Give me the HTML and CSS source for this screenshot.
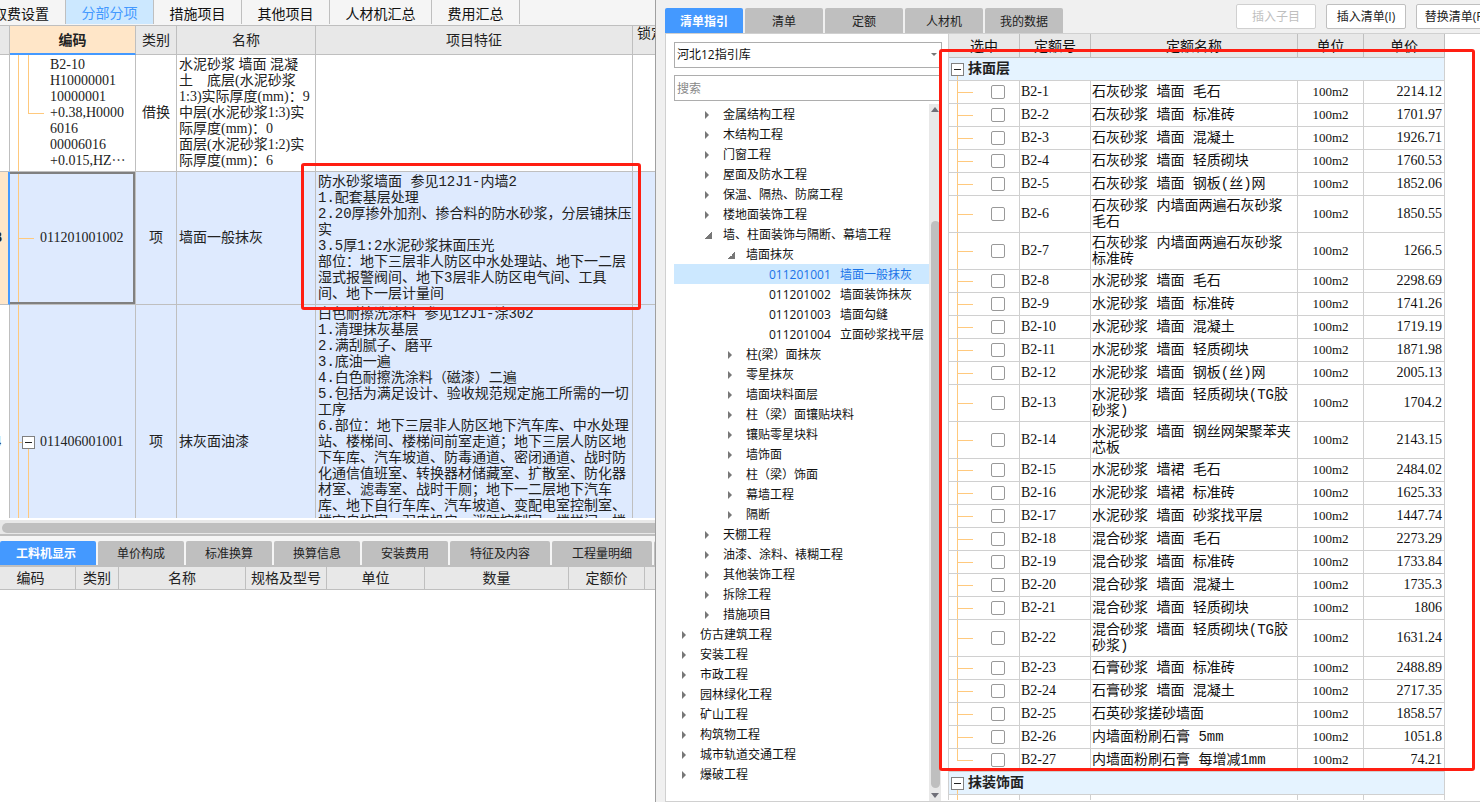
FILE: index.html
```html
<!DOCTYPE html>
<html lang="zh-CN">
<head>
<meta charset="utf-8">
<title>分部分项</title>
<link rel="stylesheet" href="styles.css">
</head>
<body>
<main class="app">
  <section class="left">
    <div class="upper">
      <nav class="main-tabs">
        <button class="main-tab first">取费设置</button>
        <button class="main-tab active">分部分项</button>
        <button class="main-tab">措施项目</button>
        <button class="main-tab">其他项目</button>
        <button class="main-tab wide">人材机汇总</button>
        <button class="main-tab">费用汇总</button>
      </nav>
      <div class="bill-wrap">
        <table class="bill">
          <colgroup><col class="c-num"><col class="c-code"><col class="c-cat"><col class="c-name"><col><col class="c-lock"></colgroup>
          <thead>
            <tr><th></th><th class="current">编码</th><th>类别</th><th>名称</th><th>项目特征</th><th class="lock">锁定</th></tr>
          </thead>
          <tbody>
            <tr class="r1">
              <td></td>
              <td class="code branch-end">B2-10<br>H10000001<br>10000001<br>+0.38,H0000<br>6016<br>00006016<br>+0.015,HZ⋯</td>
              <td class="mid">借换</td>
              <td>水泥砂浆 墙面 混凝<br>土　底层(水泥砂浆<br>1:3)实际厚度(mm)：9<br>中层(水泥砂浆1:3)实<br>际厚度(mm)：0<br>面层(水泥砂浆1:2)实<br>际厚度(mm)：6</td>
              <td></td><td></td>
            </tr>
            <tr class="r2">
              <td class="num on"><span>3</span></td>
              <td class="code focus">011201001002</td>
              <td class="mid">项</td>
              <td>墙面一般抹灰</td>
              <td class="feature">防水砂浆墙面 参见12J1-内墙2<br>1.配套基层处理<br>2.20厚掺外加剂、掺合料的防水砂浆，分层铺抹压<br>实<br>3.5厚1:2水泥砂浆抹面压光<br>部位：地下三层非人防区中水处理站、地下一二层<br>湿式报警阀间、地下3层非人防区电气间、工具<br>间、地下一层计量间</td>
              <td></td>
            </tr>
            <tr class="r3">
              <td class="num"><span>4</span></td>
              <td class="code parent"><div class="code-line"><button class="toggle" aria-label="折叠"></button>011406001001</div></td>
              <td class="mid">项</td>
              <td>抹灰面油漆</td>
              <td class="feature top">白色耐擦洗涂料 参见12J1-涂302<br>1.清理抹灰基层<br>2.满刮腻子、磨平<br>3.底油一遍<br>4.白色耐擦洗涂料（磁漆）二遍<br>5.包括为满足设计、验收规范规定施工所需的一切<br>工序<br>6.部位：地下三层非人防区地下汽车库、中水处理<br>站、楼梯间、楼梯间前室走道；地下三层人防区地<br>下车库、汽车坡道、防毒通道、密闭通道、战时防<br>化通信值班室、转换器材储藏室、扩散室、防化器<br>材室、滤毒室、战时干厕；地下一二层地下汽车<br>库、地下自行车库、汽车坡道、变配电室控制室、<br>楼宇自控室、弱电机房、消防控制室、楼梯间、楼</td>
              <td></td>
            </tr>
          </tbody>
        </table>
      </div>
      <div class="hscroll"><div class="hthumb"></div></div>
    </div>
    <div class="lower">
      <nav class="sub-tabs">
        <button class="tab first active">工料机显示</button>
        <button class="tab">单价构成</button>
        <button class="tab">标准换算</button>
        <button class="tab">换算信息</button>
        <button class="tab">安装费用</button>
        <button class="tab wide">特征及内容</button>
        <button class="tab wide">工程量明细</button>
        <button class="tab" aria-label="更多"></button>
      </nav>
      <table class="detail">
        <colgroup><col class="d1"><col class="d2"><col class="d3"><col class="d4"><col class="d5"><col><col class="d7"><col class="d8"></colgroup>
        <thead><tr><th class="cut">编码</th><th>类别</th><th>名称</th><th>规格及型号</th><th>单位</th><th>数量</th><th>定额价</th><th></th></tr></thead>
      </table>
    </div>
    <div class="mark mark-feature"></div>
  </section>

  <section class="right">
    <header class="bar">
      <nav class="lib-tabs">
        <button class="tab active">清单指引</button>
        <button class="tab">清单</button>
        <button class="tab">定额</button>
        <button class="tab">人材机</button>
        <button class="tab">我的数据</button>
      </nav>
      <div class="actions">
        <button class="action" disabled>插入子目</button>
        <button class="action">插入清单(I)</button>
        <button class="action">替换清单(R)</button>
      </div>
    </header>
    <div class="panel">
      <aside class="guide">
        <div class="combo">
          <select aria-label="指引库"><option>河北12指引库</option></select>
        </div>
        <input class="search" type="text" placeholder="搜索" aria-label="搜索">
        <div class="tree-wrap">
          <ul class="tree">
            <li class="l1"><i class="shut"></i>金属结构工程</li>
            <li class="l1"><i class="shut"></i>木结构工程</li>
            <li class="l1"><i class="shut"></i>门窗工程</li>
            <li class="l1"><i class="shut"></i>屋面及防水工程</li>
            <li class="l1"><i class="shut"></i>保温、隔热、防腐工程</li>
            <li class="l1"><i class="shut"></i>楼地面装饰工程</li>
            <li class="l1"><i class="open"></i>墙、柱面装饰与隔断、幕墙工程</li>
            <li class="l2"><i class="open"></i>墙面抹灰</li>
            <li class="l3 picked"><span>011201001</span>墙面一般抹灰</li>
            <li class="l3"><span>011201002</span>墙面装饰抹灰</li>
            <li class="l3"><span>011201003</span>墙面勾缝</li>
            <li class="l3"><span>011201004</span>立面砂浆找平层</li>
            <li class="l2"><i class="shut"></i>柱(梁）面抹灰</li>
            <li class="l2"><i class="shut"></i>零星抹灰</li>
            <li class="l2"><i class="shut"></i>墙面块料面层</li>
            <li class="l2"><i class="shut"></i>柱（梁）面镶贴块料</li>
            <li class="l2"><i class="shut"></i>镶贴零星块料</li>
            <li class="l2"><i class="shut"></i>墙饰面</li>
            <li class="l2"><i class="shut"></i>柱（梁）饰面</li>
            <li class="l2"><i class="shut"></i>幕墙工程</li>
            <li class="l2"><i class="shut"></i>隔断</li>
            <li class="l1"><i class="shut"></i>天棚工程</li>
            <li class="l1"><i class="shut"></i>油漆、涂料、裱糊工程</li>
            <li class="l1"><i class="shut"></i>其他装饰工程</li>
            <li class="l1"><i class="shut"></i>拆除工程</li>
            <li class="l1"><i class="shut"></i>措施项目</li>
            <li class="l0"><i class="shut"></i>仿古建筑工程</li>
            <li class="l0"><i class="shut"></i>安装工程</li>
            <li class="l0"><i class="shut"></i>市政工程</li>
            <li class="l0"><i class="shut"></i>园林绿化工程</li>
            <li class="l0"><i class="shut"></i>矿山工程</li>
            <li class="l0"><i class="shut"></i>构筑物工程</li>
            <li class="l0"><i class="shut"></i>城市轨道交通工程</li>
            <li class="l0"><i class="shut"></i>爆破工程</li>
          </ul>
          <div class="vscroll">
            <svg width="8" height="5" viewBox="0 0 8 5"><path d="M0 5 4 0 8 5z" fill="#6f6f78"/></svg>
            <div class="vspace"></div>
            <div class="vthumb"></div>
            <svg width="8" height="5" viewBox="0 0 8 5"><path d="M0 0 4 5 8 0z" fill="#6f6f78"/></svg>
          </div>
        </div>
      </aside>
      <div class="quota-wrap">
        <table class="quota">
          <colgroup><col class="q-pick"><col class="q-code"><col><col class="q-unit"><col class="q-price"></colgroup>
          <thead><tr><th>选中</th><th>定额号</th><th>定额名称</th><th>单位</th><th>单价</th></tr></thead>
          <tbody>
            <tr class="group"><td colspan="5"><div><button class="toggle" aria-label="折叠"></button>抹面层</div></td></tr>
            <tr><td><input type="checkbox" aria-label="B2-1"></td><td>B2-1</td><td>石灰砂浆 墙面 毛石</td><td>100m2</td><td>2214.12</td></tr>
            <tr><td><input type="checkbox" aria-label="B2-2"></td><td>B2-2</td><td>石灰砂浆 墙面 标准砖</td><td>100m2</td><td>1701.97</td></tr>
            <tr><td><input type="checkbox" aria-label="B2-3"></td><td>B2-3</td><td>石灰砂浆 墙面 混凝土</td><td>100m2</td><td>1926.71</td></tr>
            <tr><td><input type="checkbox" aria-label="B2-4"></td><td>B2-4</td><td>石灰砂浆 墙面 轻质砌块</td><td>100m2</td><td>1760.53</td></tr>
            <tr><td><input type="checkbox" aria-label="B2-5"></td><td>B2-5</td><td>石灰砂浆 墙面 钢板(丝)网</td><td>100m2</td><td>1852.06</td></tr>
            <tr class="tall"><td><input type="checkbox" aria-label="B2-6"></td><td>B2-6</td><td>石灰砂浆 内墙面两遍石灰砂浆<br>毛石</td><td>100m2</td><td>1850.55</td></tr>
            <tr class="tall"><td><input type="checkbox" aria-label="B2-7"></td><td>B2-7</td><td>石灰砂浆 内墙面两遍石灰砂浆<br>标准砖</td><td>100m2</td><td>1266.5</td></tr>
            <tr><td><input type="checkbox" aria-label="B2-8"></td><td>B2-8</td><td>水泥砂浆 墙面 毛石</td><td>100m2</td><td>2298.69</td></tr>
            <tr><td><input type="checkbox" aria-label="B2-9"></td><td>B2-9</td><td>水泥砂浆 墙面 标准砖</td><td>100m2</td><td>1741.26</td></tr>
            <tr><td><input type="checkbox" aria-label="B2-10"></td><td>B2-10</td><td>水泥砂浆 墙面 混凝土</td><td>100m2</td><td>1719.19</td></tr>
            <tr><td><input type="checkbox" aria-label="B2-11"></td><td>B2-11</td><td>水泥砂浆 墙面 轻质砌块</td><td>100m2</td><td>1871.98</td></tr>
            <tr><td><input type="checkbox" aria-label="B2-12"></td><td>B2-12</td><td>水泥砂浆 墙面 钢板(丝)网</td><td>100m2</td><td>2005.13</td></tr>
            <tr class="tall"><td><input type="checkbox" aria-label="B2-13"></td><td>B2-13</td><td>水泥砂浆 墙面 轻质砌块(TG胶<br>砂浆)</td><td>100m2</td><td>1704.2</td></tr>
            <tr class="tall"><td><input type="checkbox" aria-label="B2-14"></td><td>B2-14</td><td>水泥砂浆 墙面 钢丝网架聚苯夹<br>芯板</td><td>100m2</td><td>2143.15</td></tr>
            <tr><td><input type="checkbox" aria-label="B2-15"></td><td>B2-15</td><td>水泥砂浆 墙裙 毛石</td><td>100m2</td><td>2484.02</td></tr>
            <tr><td><input type="checkbox" aria-label="B2-16"></td><td>B2-16</td><td>水泥砂浆 墙裙 标准砖</td><td>100m2</td><td>1625.33</td></tr>
            <tr><td><input type="checkbox" aria-label="B2-17"></td><td>B2-17</td><td>水泥砂浆 墙面 砂浆找平层</td><td>100m2</td><td>1447.74</td></tr>
            <tr><td><input type="checkbox" aria-label="B2-18"></td><td>B2-18</td><td>混合砂浆 墙面 毛石</td><td>100m2</td><td>2273.29</td></tr>
            <tr><td><input type="checkbox" aria-label="B2-19"></td><td>B2-19</td><td>混合砂浆 墙面 标准砖</td><td>100m2</td><td>1733.84</td></tr>
            <tr><td><input type="checkbox" aria-label="B2-20"></td><td>B2-20</td><td>混合砂浆 墙面 混凝土</td><td>100m2</td><td>1735.3</td></tr>
            <tr><td><input type="checkbox" aria-label="B2-21"></td><td>B2-21</td><td>混合砂浆 墙面 轻质砌块</td><td>100m2</td><td>1806</td></tr>
            <tr class="tall"><td><input type="checkbox" aria-label="B2-22"></td><td>B2-22</td><td>混合砂浆 墙面 轻质砌块(TG胶<br>砂浆)</td><td>100m2</td><td>1631.24</td></tr>
            <tr><td><input type="checkbox" aria-label="B2-23"></td><td>B2-23</td><td>石膏砂浆 墙面 标准砖</td><td>100m2</td><td>2488.89</td></tr>
            <tr><td><input type="checkbox" aria-label="B2-24"></td><td>B2-24</td><td>石膏砂浆 墙面 混凝土</td><td>100m2</td><td>2717.35</td></tr>
            <tr><td><input type="checkbox" aria-label="B2-25"></td><td>B2-25</td><td>石英砂浆搓砂墙面</td><td>100m2</td><td>1858.57</td></tr>
            <tr><td><input type="checkbox" aria-label="B2-26"></td><td>B2-26</td><td>内墙面粉刷石膏 5mm</td><td>100m2</td><td>1051.8</td></tr>
            <tr class="last"><td><input type="checkbox" aria-label="B2-27"></td><td>B2-27</td><td>内墙面粉刷石膏 每增减1mm</td><td>100m2</td><td>74.21</td></tr>
            <tr class="group"><td colspan="5"><div><button class="toggle" aria-label="折叠"></button>抹装饰面</div></td></tr>
            <tr class="stub"><td></td><td></td><td></td><td></td><td></td></tr>
          </tbody>
        </table>
      </div>
    </div>
    <div class="mark mark-quota"></div>
  </section>
</main>
</body>
</html>
```
FILE: styles.css
```css
:root {
  --ui: "Open Sans", "Noto Sans CJK SC", sans-serif;
  --grid: "Liberation Serif", "Noto Sans CJK SC", serif;
  --mixed: "Liberation Mono", "Noto Sans CJK SC", monospace;
  --blue: #4499ff;
  --line: #bfbfbf;
  --soft: #d0d0d0;
  --head: #e8e8e8;
  --twig: #ffc97d;
}

* { box-sizing: border-box; }

body {
  margin: 0;
  background: #f0f0f0;
  color: #222;
  font: 12px/16px var(--ui);
}

button, input, select { font: inherit; color: inherit; margin: 0; padding: 0; }
button { border: 0; background: none; white-space: nowrap; }
table { width: 100%; table-layout: fixed; border-collapse: separate; border-spacing: 0; }
th, td { padding: 0; white-space: nowrap; }
th { font-weight: 400; }

.app {
  display: grid;
  grid-template-columns: 656fr 824fr;
  height: 100vh;
  overflow: hidden;
}

/* left side: bill of quantities */
.left {
  position: relative;
  display: flex;
  flex-direction: column;
  min-width: 0;
  min-height: 0;
  overflow: hidden;
  border-right: 1px solid #a0a0a0;
  background: #fff;
}

.upper { flex: 536 1 0; min-height: 0; display: flex; flex-direction: column; }
.lower { flex: 266 1 0; min-height: 0; }

.main-tabs {
  display: flex;
  height: 26px;
  flex: none;
  background: #f5f5f5;
  border-bottom: 1px solid var(--line);
}
.main-tab {
  width: 88px;
  height: 24px;
  padding-top: 4px;
  border-right: 1px solid var(--line);
  color: #111;
  font-size: 14px;
}
.main-tab.first { width: 66px; display: flex; align-items: center; justify-content: flex-end; padding-right: 16px; }
.main-tab.wide { width: 102px; }
.main-tab.active { padding-top: 2px; background: #cce8ff; color: var(--blue); }

.bill-wrap { flex: 1; min-height: 0; overflow: hidden; background: #fff; }
.bill { font: 14px/16px var(--grid); }
.c-num { width: 10px; }
.c-code { width: 126px; }
.c-cat { width: 41px; }
.c-name { width: 139px; }
.c-lock { width: 22px; }

.bill th {
  height: 29px;
  padding-top: 2px;
  background: var(--head);
  border-right: 1px solid var(--line);
  border-bottom: 1px solid var(--line);
}
.bill th.current { background: #ffe6c8; border-bottom: 2px solid var(--blue); font-weight: 700; }
.bill th.lock { text-align: left; vertical-align: top; padding: 0 0 0 4px; overflow: hidden; border-right: 0; }
.bill td {
  padding-left: 2px;
  border-right: 1px solid var(--line);
  border-bottom: 1px solid var(--line);
}
.bill td:last-child { border-right: 0; }
.bill td.mid { text-align: center; padding: 0; }
.bill td.feature { font-family: var(--mixed); }
.bill td.top { vertical-align: top; padding-top: 1px; }
.r1 { height: 117px; }
.r2 { height: 133px; }
.r3 { height: 275px; }
.r2 td, .r3 td { background-color: #deeafe; }
.bill .r3 .num { background: #fff; }

.bill .num { padding: 0; font-weight: 700; overflow: hidden; }
.num span { display: flex; justify-content: flex-end; padding-right: 6px; }
.r3 .num span { padding-right: 8px; }
.bill .num.on { background: #ffe6c8; border-right: 2px solid var(--blue); }

.bill .code {
  background-image: linear-gradient(var(--twig), var(--twig));
  background-repeat: no-repeat;
  background-position: 8px 0;
  background-size: 1px 100%;
}
.bill .branch-end {
  padding-left: 40px;
  background-image: linear-gradient(var(--twig), var(--twig)), linear-gradient(var(--twig), var(--twig)), linear-gradient(var(--twig), var(--twig));
  background-position: 8px 0, 18px 0, 18px 50%;
  background-size: 1px 100%, 1px 50%, 16px 1px;
}
.bill .focus {
  padding-left: 30px;
  box-shadow: inset -2px 0 #808080, inset 0 2px #808080, inset 0 -2px #808080;
  background-image: linear-gradient(var(--twig), var(--twig)), linear-gradient(var(--twig), var(--twig));
  background-position: 8px 0, 8px 50%;
  background-size: 1px 100%, 16px 1px;
}
.bill .parent {
  padding-left: 12px;
  background-image: linear-gradient(var(--twig), var(--twig)), linear-gradient(var(--twig), var(--twig)), linear-gradient(var(--twig), var(--twig));
  background-position: 8px 0, 8px 50%, 18px 100%;
  background-size: 1px 100%, 4px 1px, 1px 50%;
}
.code-line { display: flex; align-items: center; gap: 5px; }

.toggle {
  flex: none;
  width: 13px;
  height: 13px;
  border: 1px solid #808080;
  background: linear-gradient(#222, #222) center / 7px 1px no-repeat #fff;
}

.hscroll {
  flex: none;
  height: 18px;
  padding: 3px 0 3px 2px;
  border-top: 2px solid #fff;
  border-bottom: 2px solid var(--line);
  background: var(--head);
}
.hthumb { height: 10px; border-radius: 5px 0 0 5px; background: var(--line); }

.sub-tabs {
  display: flex;
  gap: 2px;
  height: 31px;
  padding-top: 5px;
  overflow: hidden;
  background: #f5f5f5;
  border-bottom: 2px solid var(--line);
}
.tab {
  flex: none;
  width: 86px;
  height: 24px;
  padding-top: 2px;
  border-radius: 2px 2px 0 0;
  background: var(--line);
  color: #222;
}
.tab.first { width: 96px; padding-right: 4px; }
.tab.wide { width: 100px; }
.tab.active { background: var(--blue); color: #fff; font-weight: 700; }

.detail { font: 14px/16px var(--grid); }
.detail th {
  height: 23px;
  padding-top: 2px;
  background: var(--head);
  border-right: 1px solid var(--line);
  border-bottom: 1px solid var(--line);
}
.detail th:last-child { border-right: 0; }
.detail th.cut { padding-right: 14px; }
.d1 { width: 76px; }
.d2 { width: 43px; }
.d3 { width: 127px; }
.d4 { width: 81px; }
.d5 { width: 98px; }
.d7 { width: 76px; }
.d8 { width: 10px; }

/* right side: quota library */
.right {
  position: relative;
  display: flex;
  flex-direction: column;
  min-width: 0;
  min-height: 0;
  overflow: hidden;
  padding-left: 9px;
}
.bar { display: flex; justify-content: space-between; height: 33px; flex: none; }
.lib-tabs { display: flex; gap: 2px; padding-top: 8px; }
.lib-tabs .tab { width: 78px; height: 25px; }
.actions { display: flex; gap: 10px; padding-top: 4px; margin-right: -16px; }
.action {
  width: 80px;
  height: 25px;
  border: 1px solid var(--line);
  border-radius: 2px;
  background: #fff;
}
.action:disabled { color: #bfbfbf; border-color: var(--soft); }

.panel {
  flex: 1;
  min-height: 0;
  display: grid;
  grid-template-columns: 282px 1fr;
  border: solid var(--soft);
  border-width: 1px 0 1px 1px;
  background: #fff;
}
.guide { display: flex; flex-direction: column; min-height: 0; padding: 8px 6px 0 8px; }
.combo { position: relative; flex: none; height: 26px; margin-bottom: 7px; }
.combo::after {
  content: "";
  position: absolute;
  right: 5px;
  top: 11px;
  border: solid transparent;
  border-width: 3px 3px 0;
  border-top-color: #777;
}
.combo select, .search {
  width: 100%;
  height: 26px;
  padding-left: 2px;
  border: 1px solid #adadad;
  border-radius: 0;
  background: #fff;
  color: #111;
  appearance: none;
}
.search { flex: none; margin-bottom: 3px; }
.search::placeholder { color: #888; opacity: 1; }

.tree-wrap { flex: 1; min-height: 0; display: flex; padding-right: 1px; }
.tree { flex: 1; margin: 0; padding: 0; list-style: none; overflow: hidden; color: #111; }
.tree li { display: flex; align-items: center; height: 20px; padding-top: 2px; white-space: nowrap; }
.tree i { display: flex; flex: none; width: 18px; }
.tree i::before { content: ""; }
.tree .shut::before { border: solid transparent; border-width: 4px 0 4px 4px; border-left-color: #777; }
.tree .open::before { width: 7px; height: 7px; background: linear-gradient(135deg, transparent 50%, #777 50%); }
.l0 { padding-left: 8px; }
.l1 { padding-left: 31px; }
.l2 { padding-left: 54px; }
.l3 { padding-left: 95px; }
.l3 span { width: 71px; }
.picked { background: #cce8ff; color: #1a73e8; }

.vscroll {
  flex: none;
  display: flex;
  flex-direction: column;
  align-items: center;
  width: 12px;
  padding: 3px 0;
  background: var(--head);
}
.vscroll svg { display: block; flex: none; }
.vspace { flex: 109; }
.vthumb { flex: 568; width: 9px; margin-bottom: 5px; border-radius: 5px; background: var(--line); }

.quota-wrap { min-height: 0; overflow: hidden; padding: 0 35px 2px 0; }
.quota { font: 14px/16px var(--grid); color: #111; border-left: 1px solid var(--soft); }
.q-pick, .q-code { width: 71px; }
.q-unit { width: 66px; }
.q-price { width: 81px; }
.quota th {
  height: 24px;
  padding-top: 2px;
  border-right: 1px solid var(--line);
  border-bottom: 1px solid var(--line);
  background: var(--head);
}
.quota td { border-right: 1px solid var(--soft); border-bottom: 1px solid var(--soft); padding-left: 1px; }
.quota tr { height: 23px; }
.quota .tall { height: 37px; }
.quota td:nth-child(3) { font-family: var(--mixed); }
.quota td:nth-child(4) { text-align: center; font-size: 13px; padding: 0; }
.quota td:nth-child(5) { text-align: right; padding-right: 2px; }
.quota td:first-child {
  padding-left: 42px;
  background: linear-gradient(var(--twig), var(--twig)) 8px 0 / 1px 100% no-repeat, linear-gradient(var(--twig), var(--twig)) 8px 50% / 16px 1px no-repeat;
}
.quota .last td:first-child {
  background: linear-gradient(var(--twig), var(--twig)) 8px 0 / 1px 50% no-repeat, linear-gradient(var(--twig), var(--twig)) 8px 50% / 16px 1px no-repeat;
}
.quota .group td {
  padding-left: 2px;
  background: linear-gradient(var(--twig), var(--twig)) 8px 100% / 1px 6px no-repeat #e5f3ff;
  color: #222;
  font-weight: 700;
}
.group div { display: flex; align-items: center; gap: 4px; }
.quota .stub { height: 5px; }
.quota .stub td { border-bottom: 0; }
.quota .stub td:first-child { background: linear-gradient(var(--twig), var(--twig)) 8px 0 / 1px 100% no-repeat; }
.quota input {
  appearance: none;
  display: block;
  width: 14px;
  height: 14px;
  border: 1px solid #999;
  border-radius: 2px;
  background: #fff;
}

/* red annotation frames over the content */
.mark { position: absolute; border: 3px solid #ff1e12; border-radius: 3px; pointer-events: none; }
.mark-feature { left: 301px; top: 163px; right: 14px; height: 147px; }
.mark-quota { left: 283px; top: 49px; right: 5px; height: 722px; }
```
